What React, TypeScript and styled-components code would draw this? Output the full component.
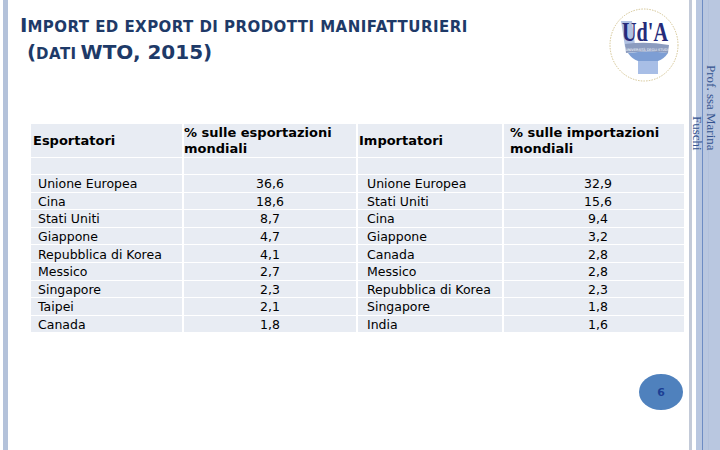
import { Fragment } from 'react';
import styled, { createGlobalStyle } from 'styled-components';

const GlobalStyle = createGlobalStyle`
  html, body {
    margin: 0;
    padding: 0;
    background: #ffffff;
  }
`;

const exporters: [string, string][] = [
  ['Unione Europea', '36,6'],
  ['Cina', '18,6'],
  ['Stati Uniti', '8,7'],
  ['Giappone', '4,7'],
  ['Repubblica di Korea', '4,1'],
  ['Messico', '2,7'],
  ['Singapore', '2,3'],
  ['Taipei', '2,1'],
  ['Canada', '1,8'],
];

const importers: [string, string][] = [
  ['Unione Europea', '32,9'],
  ['Stati Uniti', '15,6'],
  ['Cina', '9,4'],
  ['Giappone', '3,2'],
  ['Canada', '2,8'],
  ['Messico', '2,8'],
  ['Repubblica di Korea', '2,3'],
  ['Singapore', '1,8'],
  ['India', '1,6'],
];

const Frame = styled.div`
  position: relative;
  width: 720px;
  height: 450px;
  display: flex;
  background: #fff;
  overflow: hidden;
`;

const LeftRule = styled.div`
  flex-shrink: 0;
  margin-left: 3px;
  width: 5px;
  background: #b4c2da;
`;

const Main = styled.div`
  flex: 1;
  display: flex;
  flex-direction: column;
  padding: 0 5px 0 12px;
`;

const Header = styled.header`
  display: flex;
  justify-content: space-between;
  align-items: flex-start;
  height: 124px;
`;

const Title = styled.h1`
  margin: 0;
  padding-top: 13px;
  font-family: 'DejaVu Sans', Verdana, sans-serif;
  font-weight: bold;
  font-size: 20px;
  line-height: 25px;
  color: #1e3a68;
  white-space: nowrap;
`;

const Caps = styled.span`
  font-size: 15px;
  letter-spacing: 0.45px;
  text-transform: uppercase;
`;

const Logo = styled.svg`
  margin-top: 7px;
  margin-right: 4px;
`;

const Table = styled.div`
  margin-left: 11px;
  display: grid;
  grid-template-columns: 151px 172px 144px 180px;
  grid-template-rows: 33px 16px repeat(9, 16.6px);
  column-gap: 2px;
  row-gap: 1px;
  width: 653px;
`;

const Cell = styled.div<{ $pad?: number; $center?: boolean; $head?: boolean }>`
  display: flex;
  align-items: center;
  justify-content: ${(p) => (p.$center ? 'center' : 'flex-start')};
  padding-left: ${(p) => p.$pad || 0}px;
  padding-top: ${(p) => (p.$head ? 1 : 2)}px;
  box-sizing: border-box;
  background: #e8ecf3;
  font-family: 'DejaVu Sans', Verdana, sans-serif;
  font-size: ${(p) => (p.$head ? 13 : 12.5)}px;
  font-weight: ${(p) => (p.$head ? 'bold' : 'normal')};
  line-height: 16px;
  color: #000;
  white-space: nowrap;
`;

const Footer = styled.div`
  display: flex;
  justify-content: flex-end;
  margin-top: 42px;
  padding-right: 1px;
`;

const PageBadge = styled.div`
  width: 44px;
  height: 36px;
  border-radius: 50%;
  background: #4f81bd;
  display: flex;
  align-items: center;
  justify-content: center;
  font-family: 'DejaVu Sans', Verdana, sans-serif;
  font-weight: bold;
  font-size: 11px;
  color: #1c3f94;
`;

const GreyStripe = styled.div`
  flex-shrink: 0;
  width: 3px;
  background: #c3cad8;
`;

const Band = styled.div`
  flex-shrink: 0;
  width: 24px;
  margin-left: 4px;
  background: linear-gradient(
    to right,
    #b9c7e0 0,
    #b9c7e0 6px,
    #6d8cc4 6px,
    #6d8cc4 7px,
    #b9c7e0 7px,
    #b9c7e0 12px,
    #b2c1dc 12px,
    #b2c1dc 13px,
    #b9c7e0 13px
  );
`;

const Author = styled.div`
  position: absolute;
  top: 0;
  right: 2px;
  height: 151px;
  writing-mode: vertical-rl;
  text-align: end;
  font-family: 'Liberation Serif', 'Times New Roman', serif;
  font-size: 13px;
  line-height: 14px;
  color: #34538f;
`;

const App = () => {
  return (
    <Frame>
      <GlobalStyle />
      <LeftRule />
      <Main>
        <Header>
          <Title>
            I<Caps>mport ed export di prodotti manifatturieri</Caps>
            <br />
            &nbsp;(<Caps>dati</Caps>&thinsp;WTO, 2015)
          </Title>
          <Logo width="72" height="76" viewBox="0 0 72 76">
            <ellipse
              cx="36"
              cy="38"
              rx="34"
              ry="36"
              fill="#fff"
              stroke="#c9b67a"
              strokeWidth="0.8"
              strokeDasharray="1.5 1.2"
            />
            <path d="M13 14 L24 14 L27 38 L17 40 Z" fill="#8fa6d6" opacity="0.7" />
            <text
              x="14"
              y="28.5"
              transform="scale(1 1.2)"
              textLength="46"
              lengthAdjust="spacingAndGlyphs"
              fontFamily="'Liberation Serif', serif"
              fontWeight="bold"
              fontSize="23"
              fill="#262b7a"
            >
              Ud'A
            </text>
            <path d="M17 37 Q38 34 61 38 L60 46 Q38 43 18 46 Z" fill="#8c9cbf" />
            <text
              x="39"
              y="43.5"
              textAnchor="middle"
              fontFamily="'DejaVu Sans', sans-serif"
              fontSize="3.4"
              fill="#fff"
            >
              UNIVERSITÀ DEGLI STUDI
            </text>
            <path d="M20 46 Q40 43 60 46 Q56 52 50 54 L30 54 Q24 52 20 46 Z" fill="#7d9ed4" />
            <rect x="30" y="54" width="20" height="13" fill="#a8bee6" />
          </Logo>
        </Header>
        <Table>
          <Cell $head $pad={2}>Esportatori</Cell>
          <Cell $head $pad={0}>
            % sulle esportazioni
            <br />
            mondiali
          </Cell>
          <Cell $head $pad={1}>Importatori</Cell>
          <Cell $head $pad={6}>
            % sulle importazioni
            <br />
            mondiali
          </Cell>
          <Cell />
          <Cell />
          <Cell />
          <Cell />
          {exporters.map((row, i) => (
            <Fragment key={i}>
              <Cell $pad={7}>{row[0]}</Cell>
              <Cell $center>{row[1]}</Cell>
              <Cell $pad={9}>{importers[i][0]}</Cell>
              <Cell $center $pad={8}>{importers[i][1]}</Cell>
            </Fragment>
          ))}
        </Table>
        <Footer>
          <PageBadge>6</PageBadge>
        </Footer>
      </Main>
      <GreyStripe />
      <Band />
      <Author>
        Prof. ssa Marina
        <br />
        Fuschi
      </Author>
    </Frame>
  );
};

export default App;
